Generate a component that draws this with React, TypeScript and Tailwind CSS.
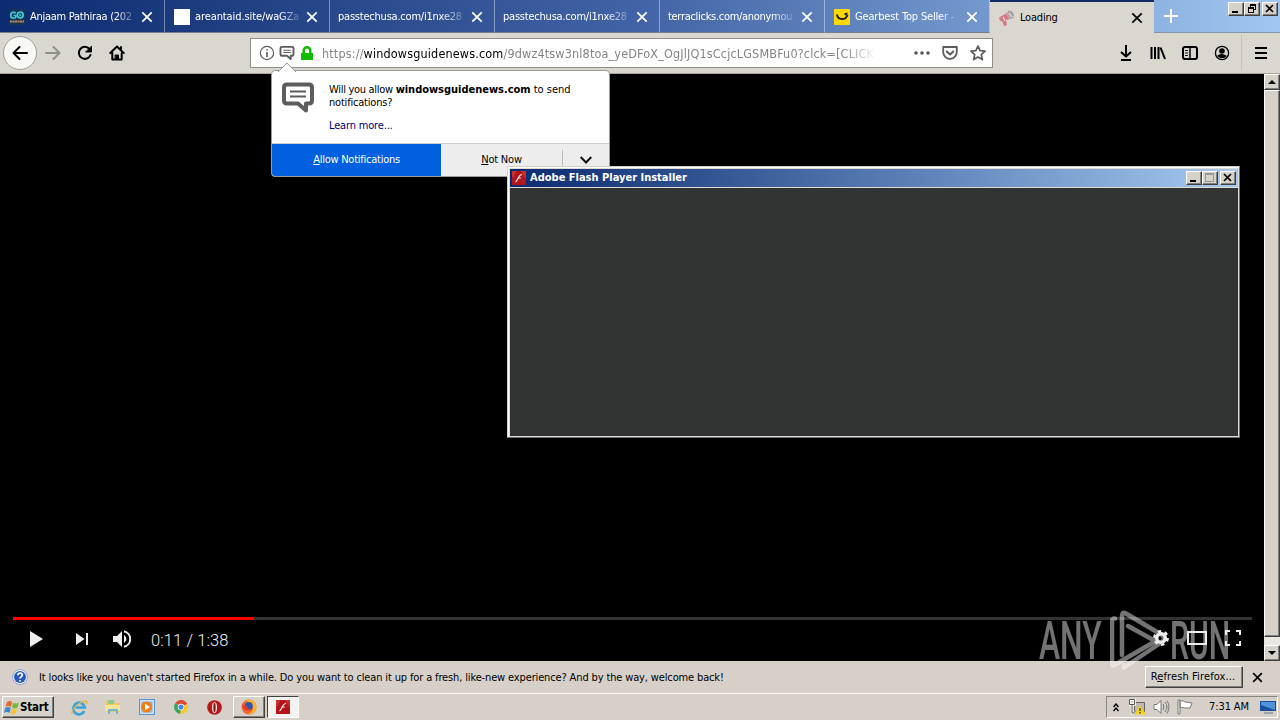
import type { ReactNode } from "react";
import clsx from "clsx";

type Tab = {
    title: string;
    icon?: "go" | "blank" | "smile" | "horn";
    tracking: string;
    active?: boolean;
};

const tabs: Tab[] = [
    { title: "Anjaam Pathiraa (202", icon: "go", tracking: "tracking-[-0.27px]" },
    { title: "areantaid.site/waGZa", icon: "blank", tracking: "tracking-[-0.1px]" },
    { title: "passtechusa.com/i1nxe28", tracking: "tracking-[-0.22px]" },
    { title: "passtechusa.com/i1nxe28", tracking: "tracking-[-0.22px]" },
    { title: "terraclicks.com/anonymou", tracking: "tracking-[-0.3px]" },
    { title: "Gearbest Top Seller -", icon: "smile", tracking: "tracking-[-0.17px]" },
    { title: "Loading", icon: "horn", tracking: "tracking-[-0.2px]", active: true },
];

const raised =
    "bg-[#d6d2ca] border border-t-white border-l-white border-r-[#404040] border-b-[#404040] shadow-[inset_-1px_-1px_0_#808080]";

const TabIcon = ({ icon }: { icon: Tab["icon"] }) => {
    if (icon === "blank") return <div className="size-4 bg-white" />;
    if (icon === "go")
        return (
            <svg className="size-4" viewBox="0 0 16 16" fill="none">
                <rect width="16" height="16" fill="#173454" />
                <path d="M6.800 4.200C6 3 2 2.600 1.700 6c-.2 4 4.500 3.800 5.200 2V6.500H4.500" stroke="#42c8d4" strokeWidth="1.700" />
                <circle cx="11.300" cy="6" r="2.900" stroke="#42c8d4" strokeWidth="1.700" />
                <path d="M10.500 4.500 13 6l-2.500 1.500z" fill="#42c8d4" />
                <path d="M1 12.500h14" stroke="#b98d55" strokeWidth="2" strokeDasharray="2 .5" />
            </svg>
        );
    if (icon === "smile")
        return (
            <svg className="size-4" viewBox="0 0 16 16" fill="none">
                <rect width="16" height="16" rx="1" fill="#ffda00" />
                <path d="M3 5.500c.5 5.500 8.500 6.500 10.500.5M10.500 5.500l3-1" stroke="#222" strokeWidth="2" />
            </svg>
        );
    return (
        <svg className="size-4" viewBox="0 0 16 16">
            <path d="M1 7 10 1l5 7-9 2z" fill="#c9a1a6" />
            <path d="M0 7.500 7 4l3 5-3 1 1 5-3 1-2-5H1z" fill="#d57a85" />
            <path d="M9 1c3-1 6 1 6 5l-3 3z" fill="#a9a3a8" />
            <path d="M10 3l3 4M4 7l2 4" stroke="#eee" />
        </svg>
    );
};

const Cross = ({ className }: { className?: string }) => (
    <svg className={clsx("size-3 shrink-0", className)} viewBox="0 0 12 12" fill="none" stroke="currentColor" strokeWidth="1.800">
        <path d="M1.300 1.300l9.400 9.400M10.700 1.300l-9.400 9.400" />
    </svg>
);

const Icon = ({ children, className }: { children: ReactNode; className?: string }) => (
    <svg
        className={clsx("size-4 shrink-0", className)}
        viewBox="0 0 16 16"
        fill="none"
        stroke="currentColor"
        strokeWidth="2"
        strokeLinecap="round"
        strokeLinejoin="round"
    >
        {children}
    </svg>
);

const CaptionButton = ({ kind }: { kind: "min" | "max" | "restore" | "close" }) => (
    <div className={clsx(raised, "h-[14px] w-4")}>
        <svg className="h-3 w-[14px]" viewBox="0 0 14 12" fill="none" stroke="#000" shapeRendering="crispEdges">
            {kind === "min" && <path d="M3 9h6" strokeWidth="2" />}
            {kind === "max" && <path d="M2.500 1.500h8v8h-8zM2 2.500h9" stroke="#999" />}
            {kind === "restore" && <path d="M5.500 4V1.500h5v5H9M5 2.500h6M3.500 4.500h5v5h-5zM3 5.500h6" />}
            {kind === "close" && <path d="M3 2l7 7M10 2l-7 7" strokeWidth="1.700" shapeRendering="auto" />}
        </svg>
    </div>
);

const TabStrip = () => (
    <div className="flex h-[33px] bg-linear-to-r from-[#0d2b70] via-[#4263a5] to-[#a1c7f0] text-white">
        {tabs.map((tab, i) => (
            <div
                key={i}
                className={clsx(
                    "flex shrink-0 items-center pt-px",
                    tab.icon ? "pl-[9px]" : "pl-2",
                    tab.active
                        ? "w-[164px] border-t-[2px] border-[#142866] bg-[#dad7d1] pt-0 pr-[11px] text-black"
                        : "w-[165px] border-r border-b border-r-white/40 border-b-[#777f8c] pr-[11px]"
                )}
            >
                {tab.icon && (
                    <div className="mr-[5px] shrink-0">
                        <TabIcon icon={tab.icon} />
                    </div>
                )}
                <div className={clsx("flex-1 whitespace-nowrap", tab.tracking, !tab.active && "mask-r-from-82% mask-r-to-104%")}>
                    {tab.title}
                </div>
                <Cross className="ml-[7px]" />
            </div>
        ))}
        <div className="flex flex-1 border-b border-[#8595a9]">
            <svg className="mt-[9px] ml-[10px] size-[14px]" viewBox="0 0 14 14" stroke="#fff" strokeWidth="2">
                <path d="M7 0v14M0 7h14" />
            </svg>
            <div className="mt-[2px] ml-auto flex pr-[2px]">
                <CaptionButton kind="min" />
                <CaptionButton kind="restore" />
                <div className="ml-[2px]">
                    <CaptionButton kind="close" />
                </div>
            </div>
        </div>
    </div>
);

const Bubble = ({ className }: { className?: string }) => (
    <svg className={className} viewBox="0 0 32 30" fill="none" stroke="#5d5d5d">
        <path d="M5 2h22q3 0 3 3v13q0 3-3 3h-3v7l-8-7H5q-3 0-3-3V5q0-3 3-3z" strokeWidth="4" strokeLinejoin="round" />
        <path d="M8 9h16M8 14h16" strokeWidth="2.200" />
    </svg>
);

const NavBar = () => (
    <div className="flex h-[41px] shrink-0 items-center border-b border-[#aaa69e] bg-[#dad7d1]">
        <div className="ml-[3px] flex size-[34px] shrink-0 items-center justify-center rounded-full border border-[#a19f9b] bg-[#f8f8f7]">
            <Icon>
                <path d="M15 8H1.500M7.500 2 1.500 8l6 6" />
            </Icon>
        </div>
        <Icon className="ml-2 text-[#918f8b]">
            <path d="M1 8h13.500M8.500 2l6 6-6 6" />
        </Icon>
        <Icon className="ml-4">
            <path d="M13.500 10A6 6 0 1 1 12.500 4" />
            <path d="M14.500 1.500V7H9z" fill="currentColor" strokeWidth="1" />
        </Icon>
        <Icon className="ml-4">
            <path d="M1.300 8 8 1.500 14.700 8M3.300 8v6.500h9.400V8M12 2v2" />
            <path d="M6.500 10h3v4h-3z" fill="currentColor" strokeWidth="1" />
        </Icon>

        {/* Address field */}
        <div className="ml-[125px] flex h-[30px] w-[743px] items-center border border-[#8f8d89] bg-white text-[#5c5c5c]">
            <Icon className="ml-[8px]">
                <circle cx="8" cy="8" r="6.600" strokeWidth="1.200" />
                <path d="M8 7.500v4M8 4.700v.2" strokeWidth="1.600" />
            </Icon>
            <Bubble className="ml-1 h-[14px] w-4" />
            <svg className="ml-[6px] h-[14px] w-3" viewBox="0 0 12 14" fill="#12bc00">
                <path d="M0 7h1.500V4.500a4.500 4.500 0 0 1 9 0V7H12v7H0zM4 7h4V4.500a2 2 0 0 0-4 0z" fillRule="evenodd" />
            </svg>
            <div className="ml-[9px] w-[555px] pt-px text-[12.500px] tracking-[0.16px] whitespace-nowrap text-[#858585] mask-r-from-94% mask-r-to-100%">
                https://<span className="text-black">windowsguidenews.com</span>
                /9dwz4tsw3nl8toa_yeDFoX_OgJlJQ1sCcjcLGSMBFu0?clck=[CLICK
            </div>
            <svg className="ml-auto h-4 w-4 shrink-0" viewBox="0 0 16 16" fill="#555">
                <circle cx="2" cy="8" r="1.800" />
                <circle cx="8" cy="8" r="1.800" />
                <circle cx="14" cy="8" r="1.800" />
            </svg>
            <Icon className="ml-[12px]">
                <path d="M1.200 2h13.600v5a6.800 6.800 0 0 1-13.600 0z" strokeWidth="1.800" />
                <path d="M4.700 6.500 8 9.500l3.300-3" />
            </Icon>
            <Icon className="mr-[6px] ml-[12px]">
                <path d="m8 1 2.100 4.700 5 .5-3.800 3.400 1.100 5L8 12l-4.400 2.600 1.100-5L.9 6.200l5-.5z" strokeWidth="1.700" />
            </Icon>
        </div>

        <Icon className="ml-[125px]">
            <path d="M8 0v11M3 7l5 4.500L13 7M3 15h10" strokeLinecap="butt" />
        </Icon>
        <Icon className="ml-4">
            <path d="M1.500 2v12M5 2v12M8.500 2v12M10.500 2.500l4.500 11.500" strokeLinecap="butt" />
        </Icon>
        <Icon className="ml-4">
            <rect x="1" y="2" width="14" height="12" rx="2" />
            <path d="M8 2v12" strokeWidth="1.500" />
            <path d="M3.500 5.500h2M3.500 8h2M3.500 10.500h2" strokeWidth="1" />
        </Icon>
        <Icon className="ml-4">
            <circle cx="8" cy="8" r="6.600" strokeWidth="1.300" />
            <circle cx="8" cy="6" r="2.800" fill="currentColor" stroke="none" />
            <path d="M3 11q2.500-2.500 5-2t5 2q-5 4.500-10 0z" fill="currentColor" stroke="none" />
        </Icon>
        <div className="ml-[11px] h-9 w-px bg-[#c6c2bb]" />
        <svg className="ml-[13px] h-3 w-3" viewBox="0 0 12 12" stroke="#000" strokeWidth="2">
            <path d="M0 1h12M0 6h12M0 11h12" />
        </svg>
    </div>
);

const ScrollBar = () => (
    <div className="flex w-4 flex-col bg-[#ebe8e3]">
        <div className={clsx(raised, "flex h-4 items-center justify-center")}>
            <div className="border-x-[4px] border-b-[4px] border-x-transparent border-b-black" />
        </div>
        <div className={clsx(raised, "h-[547px]")} />
        <div className={clsx(raised, "mt-auto flex h-4 items-center justify-center")}>
            <div className="border-x-[4px] border-t-[4px] border-x-transparent border-t-black" />
        </div>
    </div>
);

const Player = () => (
    <div className="flex h-[587px] shrink-0 bg-black">
        <div className="flex flex-1 flex-col justify-end pr-3 pl-[13px]">
            <div className="h-[3px] bg-[#333]">
                <div className="h-full w-[241px] bg-[#f00]" />
            </div>
            <div className="flex h-[41px] items-center pb-[4px] text-[#eee]">
                <svg className="ml-[17px] h-4 w-[13px]" viewBox="0 0 13 16" fill="currentColor">
                    <path d="M0 0l13 8-13 8z" />
                </svg>
                <svg className="ml-[33px] h-3 w-3" viewBox="0 0 12 12" fill="currentColor">
                    <path d="M0 0l8.500 6L0 12zM10 0h2v12h-2z" />
                </svg>
                <svg className="ml-[25px] h-[18px] w-[18px]" viewBox="0 0 18 18" fill="currentColor">
                    <path d="M0 6v6h4l5 5V1L4 6zM11 5v8a4.500 4.500 0 0 0 0-8z" />
                    <path d="M11 1.200a8 8 0 0 1 0 15.600" fill="none" stroke="currentColor" strokeWidth="2" />
                </svg>
                <span className="ml-5 pt-1 font-[Roboto] text-[16.500px] font-light tracking-[0.1px]">0:11 / 1:38</span>
            </div>
        </div>
        <ScrollBar />
    </div>
);

const NoticeBar = () => (
    <div className="flex h-8 items-center bg-[#d6d0c9]">
        <svg className="ml-3 size-4" viewBox="0 0 16 16">
            <circle cx="8" cy="8" r="7.500" fill="#edf2fb" stroke="#8fa4cc" />
            <circle cx="8" cy="8" r="6" fill="#2759bd" />
            <path d="M5.800 6.300c0-3.200 4.700-2.900 4.500-.2C10.200 7.600 8 7.700 8 9.500M8 11v1.500" fill="none" stroke="#fff" strokeWidth="1.700" />
        </svg>
        <span className="ml-[11px] pt-px tracking-[-0.14px] whitespace-nowrap">
            It looks like you haven't started Firefox in a while. Do you want to clean it up for a fresh, like-new experience? And by the way, welcome back!
        </span>
        <div className={clsx(raised, "mb-px ml-auto flex h-[22px] w-[98px] shrink-0 items-center justify-center pr-[2px] whitespace-nowrap")}>
            <span className="tracking-[0.12px]">
                R<u>e</u>fresh Firefox...
            </span>
        </div>
        <Cross className="mr-[17px] ml-[9px] size-[11px]" />
    </div>
);

const Flash = ({ className }: { className?: string }) => (
    <svg className={className} viewBox="0 0 16 16">
        <rect width="16" height="16" rx="1" fill="#b3151a" />
        <path d="M0 0h5L2 7H0zM10 0h6v9z" fill="#c9302c" />
        <path d="M4 12.500c3-1 2.500-8 7.500-8.500M7 8h3" fill="none" stroke="#fff" strokeWidth="1.300" />
    </svg>
);

const TaskBar = () => (
    <div className="flex h-[27px] items-center border-t border-white bg-[#d6d0c9]">
        <div className={clsx(raised, "ml-[2px] flex h-[22px] w-[52px] items-center pl-[1px]")}>
            <svg className="h-[15px] w-4 shrink-0" viewBox="0 0 16 15">
                <path d="M3 2q3-2 5 0L7 7Q4 5 1.500 7z" fill="#e66a2c" />
                <path d="M9 2.500q3 2 6 0l-1.500 5q-3 2-5.500 0z" fill="#77b943" />
                <path d="M1.200 8q3-2 5.500 0l-1 5Q3 11 0 13z" fill="#3f87cf" />
                <path d="M7.700 8.500q3 2 5.500 0l-1.500 5q-3 2-5 0z" fill="#f6c434" />
            </svg>
            <b className="text-[11.500px] tracking-[-0.2px]">Start</b>
        </div>
        <svg className="ml-[17px] size-[17px]" viewBox="0 0 16 16" fill="none">
            <path d="M12.500 11.500A5.500 5.500 0 1 1 13 8H4" stroke="#38a4dd" strokeWidth="2.500" />
            <path d="M1 14C0 10 8 2 14.500 2c1 .5 0 2-.5 3" stroke="#e4b43d" strokeWidth="1.200" />
        </svg>
        <svg className="ml-[17px] size-4" viewBox="0 0 16 16">
            <path d="M1 2h5l1 2h8v9H1z" fill="#ecc95c" />
            <path d="M3 1h6v4H3z" fill="#8ec98a" />
            <path d="M0 6h15v6H0z" fill="#f8e597" />
            <path d="M3 15v-5h10v5h-2v-3H5v3z" fill="#70b6dc" />
        </svg>
        <svg className="ml-[18px] size-4" viewBox="0 0 16 16">
            <rect x=".5" y=".5" width="15" height="15" fill="#cfe1f3" stroke="#5793cf" />
            <rect x="2.500" y="2.500" width="11" height="11" fill="#8bb6e0" />
            <circle cx="7.500" cy="8" r="5.500" fill="#ee7f17" />
            <path d="M6 4.800 11 8l-5 3.200z" fill="#fff" />
        </svg>
        <svg className="ml-[19px] size-[14px]" viewBox="0 0 16 16">
            <path d="M8 8 1.500 3.500A8 8 0 0 1 15.200 4.500z" fill="#df4934" />
            <path d="M8 8 1.500 3.500A8 8 0 0 0 7.500 16z" fill="#3aa65a" />
            <path d="M8 8l7.200-3.500A8 8 0 0 1 7.500 16z" fill="#fbc922" />
            <circle cx="8" cy="8" r="3.700" fill="#fff" />
            <circle cx="8" cy="8" r="2.900" fill="#4684e8" />
        </svg>
        <svg className="ml-[19px] size-[15px]" viewBox="0 0 16 16">
            <circle cx="8" cy="8" r="7.800" fill="#b5171b" />
            <ellipse cx="8" cy="8" rx="2.800" ry="6" fill="#efdcda" />
            <ellipse cx="8" cy="8" rx="1.200" ry="5" fill="#8a1115" />
        </svg>
        <div className={clsx(raised, "ml-[11px] flex h-[22px] w-8 items-center justify-center")}>
            <svg className="size-4" viewBox="0 0 16 16">
                <circle cx="8" cy="8" r="7.500" fill="#f0682b" />
                <path d="M5 1c6-2 11 3 10.500 8-1 5-6 7-9 6 5-1 6-5 5-8-1-2-4-3-6.500-6z" fill="#fcb62c" />
                <circle cx="7.800" cy="7" r="4" fill="#2d58ae" />
                <path d="M1 3c0 4 2 4 6 4-2 1-1 3 3 3-2 3-7 2-9-3z" fill="#e23b32" />
            </svg>
        </div>
        <div className="ml-[2px] flex h-[22px] w-8 items-center justify-center border border-t-[#404040] border-r-white border-b-white border-l-[#404040] bg-[#f4f2ef]">
            <Flash className="h-[14px] w-4" />
        </div>

        {/* Tray */}
        <div className="mr-[2px] ml-auto flex h-[22px] w-[172px] items-center border border-t-[#8a8680] border-r-white border-b-white border-l-[#8a8680]">
            <svg className="ml-[6px] h-[9px] w-[6px]" viewBox="0 0 6 9" fill="none" stroke="#000" strokeWidth="1.400">
                <path d="M.5 4 3 1l2.500 3M.5 8 3 5l2.500 3" />
            </svg>
            <svg className="ml-[10px] h-4 w-[17px]" viewBox="0 0 17 16">
                <path d="M5.500 3.500h10v9h-10z" fill="#bcbab5" stroke="#66645f" />
                <path d="M.5.500h5v5h-5zM3 6v8h6" fill="none" stroke="#fff" strokeWidth="2.500" />
                <path d="M.5.500h5v5h-5zM3 6v8h6" fill="none" stroke="#555" />
                <path d="M10.500 6 17 15.500H5.500z" fill="#f7d41c" />
                <path d="M11 9v3M11 13v1.500" stroke="#333" strokeWidth="1.300" />
            </svg>
            <svg className="ml-[7px] h-4 w-[17px]" viewBox="0 0 17 16" fill="none">
                <path d="M1 5.500h3l4-4v13l-4-4H1z" fill="#fff" stroke="#777" />
                <path d="M10 5q2 3 0 6M12 3q4 5 0 10M14 1.500q4 6.500 0 13" stroke="#777" />
            </svg>
            <svg className="ml-[7px] h-4 w-4" viewBox="0 0 16 16">
                <path d="M1 1h2v14H1zM3 2c3-1 4 1 6 1l6 1-2 5H9c-2 0-3-1-6 0z" fill="#fff" stroke="#777" />
            </svg>
            <span className="ml-[16px] tracking-[-0.1px] whitespace-nowrap">7:31 AM</span>
            <svg className="mr-[1px] ml-auto h-[13px] w-4" viewBox="0 0 16 13">
                <path d="M0 0h16v10H0z" fill="#1a4f9d" />
                <path d="M1 1h14v8L1 4z" fill="#4f93d8" />
                <path d="M4 12h9" stroke="#67798b" />
            </svg>
        </div>
    </div>
);

const PermissionPopup = () => (
    <div className="absolute top-[70px] left-[271px] h-[107px] w-[339px] rounded-[4px] border border-[#9c9a97] bg-white">
        <svg className="absolute -top-[9px] left-[5px] h-[10px] w-5" viewBox="0 0 20 10" fill="#fff" stroke="#9c9a97">
            <path d="M1 10 10 1l9 9" />
        </svg>
        <div className="flex h-[72px] pl-[10px]">
            <Bubble className="mt-[11px] h-[31px] w-8" />
            <div className="mt-[12px] ml-[15px] leading-[13px]">
                <p className="whitespace-nowrap">
                    <span className="tracking-[-0.3px]">Will you allow </span>
                    <b className="tracking-[-0.02px]">windowsguidenews.com</b> to send
                </p>
                <p className="tracking-[-0.2px]">notifications?</p>
                <p className="mt-[10px] tracking-[-0.17px] text-[#00006e]">Learn more...</p>
            </div>
        </div>
        <div className="flex h-[33px] overflow-hidden rounded-b-[3px] border-t border-[#ccc] bg-[#ededed]">
            <div className="flex w-[169px] items-center justify-center bg-[#0060df] tracking-[-0.25px] text-white">
                <span><u>A</u>llow Notifications</span>
            </div>
            <div className="flex w-[121px] items-center justify-center tracking-[-0.2px]">
                <span><u>N</u>ot Now</span>
            </div>
            <div className="mt-[6px] h-5 w-px bg-[#bdbdbd]" />
            <svg className="mt-3 ml-[17px] h-2 w-3" viewBox="0 0 12 8" fill="none" stroke="#111" strokeWidth="2">
                <path d="M.7 1 6 6.500 11.300 1" />
            </svg>
        </div>
    </div>
);

const InstallerWindow = () => (
    <div className="absolute top-[166px] left-[507px] flex h-[272px] w-[733px] flex-col border border-[#d4d0c8] border-r-[#707070] border-b-[#707070] bg-[#dedbd5] pt-[2px] pr-px pb-px pl-[2px] shadow-[inset_1px_1px_0_#fff]">
        <div className="flex h-[18px] items-center bg-linear-to-r from-[#0d2a70] to-[#a6caf0] pr-[2px] pl-[2px] text-white">
            <Flash className="size-[14px]" />
            <b className="ml-[4px]">Adobe Flash Player Installer</b>
            <div className="ml-auto flex">
                <CaptionButton kind="min" />
                <CaptionButton kind="max" />
                <div className="ml-[2px]">
                    <CaptionButton kind="close" />
                </div>
            </div>
        </div>
        <div className="mt-px flex-1 bg-[#323433]" />
    </div>
);

const Watermark = () => (
    <div className="absolute top-[609px] left-[1039px] flex h-[64px] w-[194px] items-center font-[Roboto] text-[53px] leading-[44px] font-medium text-white/45">
        <div className="w-[71px]">
            <div className="origin-left scale-x-[0.6]">ANY</div>
        </div>
        <svg className="h-[64px] w-[58px] shrink-0" viewBox="0 0 58 64" fill="none" stroke="currentColor" strokeWidth="4.500" strokeLinecap="round" strokeLinejoin="round">
            <path d="M12 46V7q0-5 4-2.500L52 26q4 3.500 0 7L14 58.500v-2M18 17l29 16M5 9.500q-3-.5-3 2.500v43.500q0 2 2.500.5L44 33" />
        </svg>
        <div className="ml-[2px] w-[60px]">
            <div className="origin-left scale-x-[0.57]">RUN</div>
        </div>
    </div>
);

const PlayerSettings = () => (
    <div className="absolute top-[630px] left-[1153px] flex h-4 items-center text-[#eee]">
        <svg className="size-4" viewBox="0 0 16 16" fill="none" stroke="currentColor">
            <circle cx="8" cy="8" r="4.300" strokeWidth="3.500" />
            <circle cx="8" cy="8" r="6.700" strokeWidth="2.500" strokeDasharray="3.500 3.516" />
        </svg>
        <svg className="ml-[18px] h-[14px] w-5" viewBox="0 0 20 14" fill="none" stroke="currentColor" strokeWidth="2">
            <path d="M1 1h18v12H1z" />
        </svg>
        <svg className="ml-[18px] size-4" viewBox="0 0 16 16" fill="none" stroke="currentColor" strokeWidth="2">
            <path d="M1 5V1h4M11 1h4v4M15 11v4h-4M5 15H1v-4" />
        </svg>
    </div>
);

export default function App() {
    return (
        <div className="relative flex h-[720px] w-[1280px] flex-col overflow-hidden bg-black font-['DejaVu_Sans_Condensed','Noto_Sans',sans-serif] text-[11px] leading-[14px] text-black">
            <TabStrip />
            <NavBar />
            <Player />
            <NoticeBar />
            <TaskBar />
            <PermissionPopup />
            <InstallerWindow />
            <Watermark />
            <PlayerSettings />
        </div>
    );
}
